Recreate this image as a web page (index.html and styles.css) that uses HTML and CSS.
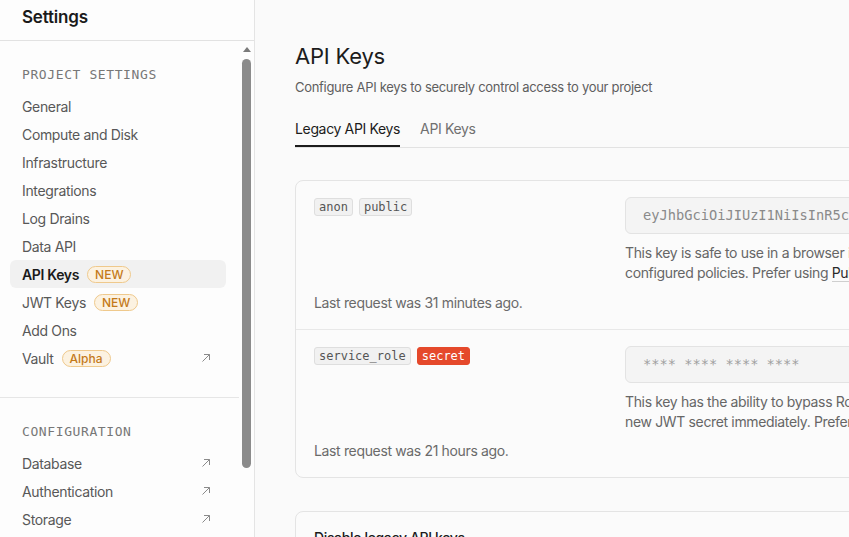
FILE: index.html
```html
<!DOCTYPE html>
<html lang="en">
<head>
<meta charset="utf-8">
<title>API Keys</title>
<link rel="stylesheet" href="styles.css">
</head>
<body>
<aside class="sidebar">
  <div class="sidebar-head"><h1 class="sidebar-title">Settings</h1></div>
  <div class="sidebar-body">
    <nav class="nav">
      <section class="nav-section">
        <div class="nav-label">PROJECT SETTINGS</div>
        <a class="nav-item">General</a>
        <a class="nav-item">Compute and Disk</a>
        <a class="nav-item">Infrastructure</a>
        <a class="nav-item">Integrations</a>
        <a class="nav-item">Log Drains</a>
        <a class="nav-item">Data API</a>
        <a class="nav-item active">API Keys <span class="badge">NEW</span></a>
        <a class="nav-item">JWT Keys <span class="badge">NEW</span></a>
        <a class="nav-item">Add Ons</a>
        <a class="nav-item">Vault <span class="badge">Alpha</span>
          <svg class="ext" viewBox="0 0 10 10"><path d="M1.5 8.5L8.5 1.5M3 1.5H8.5V7"/></svg></a>
      </section>
      <section class="nav-section divided">
        <div class="nav-label">CONFIGURATION</div>
        <a class="nav-item">Database
          <svg class="ext" viewBox="0 0 10 10"><path d="M1.5 8.5L8.5 1.5M3 1.5H8.5V7"/></svg></a>
        <a class="nav-item">Authentication
          <svg class="ext" viewBox="0 0 10 10"><path d="M1.5 8.5L8.5 1.5M3 1.5H8.5V7"/></svg></a>
        <a class="nav-item">Storage
          <svg class="ext" viewBox="0 0 10 10"><path d="M1.5 8.5L8.5 1.5M3 1.5H8.5V7"/></svg></a>
      </section>
    </nav>
    <div class="scrollbar">
      <div class="scroll-up"></div>
      <div class="scroll-thumb"></div>
    </div>
  </div>
</aside>
<main class="main">
  <div class="content">
    <h2 class="page-title">API Keys</h2>
    <p class="page-sub">Configure API keys to securely control access to your project</p>
    <div class="tabs">
      <span class="tab active">Legacy API Keys</span>
      <span class="tab">API Keys</span>
    </div>
    <div class="card">
      <div class="key-row">
        <div class="key-left">
          <div class="tags"><span class="tag">anon</span><span class="tag">public</span></div>
          <div class="last">Last request was 31 minutes ago.</div>
        </div>
        <div class="key-right">
          <div class="key-input">eyJhbGciOiJIUzI1NiIsInR5cCI6IkpXVCJ9</div>
          <p class="key-desc">This key is safe to use in a browser if you have enabled Row Level Security for your tables and<br>configured policies. Prefer using <span class="link">Publishable</span> API keys instead.</p>
        </div>
      </div>
      <div class="key-row">
        <div class="key-left">
          <div class="tags"><span class="tag">service_role</span><span class="tag secret">secret</span></div>
          <div class="last">Last request was 21 hours ago.</div>
        </div>
        <div class="key-right">
          <div class="key-input stars">**** **** **** ****</div>
          <p class="key-desc">This key has the ability to bypass Row Level Security. Never share it publicly. If leaked, generate a<br>new JWT secret immediately. Prefer using <span class="link">Secret</span> API keys instead.</p>
        </div>
      </div>
    </div>
    <div class="card card-2">
      <div class="card-2-title">Disable legacy API keys</div>
    </div>
  </div>
</main>
</body>
</html>
```

FILE: styles.css
```css
* { box-sizing: border-box; }
html, body { margin: 0; padding: 0; }
body {
  width: 849px;
  height: 537px;
  overflow: hidden;
  display: flex;
  font-family: Inter, "Noto Sans", sans-serif;
  font-size: 14px;
  letter-spacing: -0.35px;
  color: #1c1c1c;
  background: #fafafa;
}
.sidebar {
  width: 255px;
  flex: none;
  display: flex;
  flex-direction: column;
  background: #fdfdfd;
  border-right: 1px solid #e4e4e4;
}
.sidebar-head {
  height: 41px;
  flex: none;
  border-bottom: 1px solid #e2e2e2;
  padding-left: 22px;
  display: flex;
  align-items: center;
  padding-bottom: 6px;
}
.sidebar-title {
  margin: 0;
  font-size: 17px;
  font-weight: 600;
  letter-spacing: -0.2px;
  color: #1a1a1a;
}
.sidebar-body {
  flex: 1;
  display: flex;
  min-height: 0;
  overflow: hidden;
}
.nav {
  flex: 1;
  min-width: 0;
}
.nav-section {
  padding: 24px 13px 0 10px;
}
.nav-section.divided {
  margin-top: 25px;
  border-top: 1px solid #e6e6e6;
}
.nav-label {
  height: 20px;
  line-height: 20px;
  padding-left: 12px;
  margin-bottom: 7px;
  font-family: "DejaVu Sans Mono", monospace;
  font-size: 13px;
  letter-spacing: 0.6px;
  color: #777;
}
.nav-item {
  display: flex;
  align-items: center;
  gap: 8px;
  height: 28px;
  padding: 0 15px 0 12px;
  border-radius: 6px;
  color: #585858;
  font-size: 14px;
}
.nav-item.active {
  background: #f1f1f1;
  color: #1a1a1a;
  font-weight: 600;
}
.ext {
  margin-left: auto;
  width: 10px;
  height: 10px;
  fill: none;
  stroke: #8a8a8a;
  stroke-width: 1;
}
.badge {
  display: inline-flex;
  align-items: center;
  height: 17px;
  padding: 0 7px;
  border-radius: 9px;
  border: 1px solid #efc98c;
  background: #fcf2e1;
  color: #c47a1a;
  font-size: 12px;
  font-weight: 500;
  letter-spacing: 0;
}
.scrollbar {
  width: 15px;
  flex: none;
  display: flex;
  flex-direction: column;
  align-items: center;
  padding-top: 6px;
}
.scroll-up {
  width: 0;
  height: 0;
  border-left: 4px solid transparent;
  border-right: 4px solid transparent;
  border-bottom: 5px solid #7a7a7a;
}
.scroll-thumb {
  margin-top: 7px;
  width: 9px;
  height: 409px;
  border-radius: 5px;
  background: #8b8b8b;
}
.main {
  flex: 1;
  min-width: 0;
  overflow: hidden;
}
.content {
  width: 760px;
  padding: 41px 0 0 40px;
}
.page-title {
  margin: 0;
  font-size: 22px;
  font-weight: 400;
  letter-spacing: -0.2px;
  line-height: 30px;
  color: #1c1c1c;
}
.page-sub {
  margin: 6px 0 0;
  line-height: 20px;
  font-size: 13px;
  letter-spacing: -0.3px;
  color: #5e5e5e;
}
.tabs {
  margin-top: 22px;
  display: flex;
  gap: 20px;
  border-bottom: 1px solid #e2e2e2;
}
.tab {
  padding: 0 0 8px;
  line-height: 20px;
  color: #707070;
}
.tab.active {
  color: #1c1c1c;
  box-shadow: inset 0 -2px 0 #1c1c1c;
}
.card {
  margin-top: 32px;
  border: 1px solid #e4e4e4;
  border-radius: 8px;
  background: #fbfbfb;
}
.key-row {
  display: grid;
  grid-template-columns: 311px 1fr;
  padding: 17px 0 16px 18px;
  min-height: 148px;
}
.key-row + .key-row {
  border-top: 1px solid #e8e8e8;
}
.key-left {
  display: flex;
  flex-direction: column;
  justify-content: space-between;
}
.tags {
  display: flex;
  gap: 6px;
}
.tag {
  height: 18px;
  line-height: 16px;
  padding: 0 4px;
  border: 1px solid #dedede;
  border-radius: 3px;
  background: #f1f1f1;
  font-family: "DejaVu Sans Mono", monospace;
  font-size: 12px;
  letter-spacing: 0;
  color: #555;
}
.tag.secret {
  background: #e5492b;
  border-color: #e5492b;
  color: #fff;
}
.last {
  line-height: 20px;
  color: #6a6a6a;
}
.key-right {
  margin-top: -1px;
}
.key-input {
  height: 37px;
  line-height: 35px;
  padding-left: 17px;
  border: 1px solid #e3e3e3;
  border-radius: 6px;
  background: #f4f4f4;
  font-family: "DejaVu Sans Mono", monospace;
  font-size: 13.7px;
  letter-spacing: 0;
  color: #8a8a8a;
  white-space: nowrap;
  overflow: hidden;
}
.key-input.stars {
  color: #a0a0a0;
}
.key-desc {
  margin: 9px 0 0;
  line-height: 20px;
  color: #666;
  white-space: nowrap;
}
.link {
  color: #2a2a2a;
  border-bottom: 1px solid #cfcfcf;
}
.card-2 {
  margin-top: 33px;
  height: 80px;
  padding: 16px 18px;
}
.card-2-title {
  line-height: 20px;
  font-weight: 500;
  color: #1c1c1c;
}
```
